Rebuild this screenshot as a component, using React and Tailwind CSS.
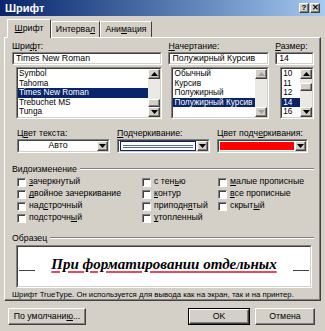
import React from "react";

// ---------- win2000 bits ----------

const raised =
  "border border-t-white border-l-white border-r-[#404040] border-b-[#404040] bg-[#d4d0c8] shadow-[inset_-1px_-1px_0_#808080]";

function Sunken({ className = "", inner = "", children }) {
  return (
    <div className={`border border-t-[#808080] border-l-[#808080] border-r-white border-b-white ${className}`}>
      <div className={`h-full w-full border border-t-[#404040] border-l-[#404040] border-r-[#d4d0c8] border-b-[#d4d0c8] bg-white ${inner}`}>
        {children}
      </div>
    </div>
  );
}

function Tri({ dir = "down", color = "#000000" }) {
  return (
    <svg width="7" height="4" viewBox="0 0 7 4">
      <path d={dir === "down" ? "M0 0H7L3.5 4Z" : "M0 4H7L3.5 0Z"} fill={color} />
    </svg>
  );
}

function ArrowBtn({ dir = "down", disabled = false, className = "" }) {
  return (
    <div className={`${raised} flex items-center justify-center ${className}`}>
      <Tri dir={dir} color={disabled ? "#a0a0a0" : "#000000"} />
    </div>
  );
}

function ScrollBar({ thumbTop, disabled = false }) {
  return (
    <div className="w-[12px] h-full flex flex-col bg-[#ebe9e4]">
      <ArrowBtn dir="up" disabled={disabled} className="h-[10px] w-full" />
      <div className="flex-1">
        {thumbTop !== undefined && (
          <div className={`${raised} h-[8px] w-full`} style={{ marginTop: thumbTop }} />
        )}
      </div>
      <ArrowBtn dir="down" disabled={disabled} className="h-[10px] w-full" />
    </div>
  );
}

function ListBox({ items, selected, thumbTop, disabled, className = "" }) {
  return (
    <Sunken className={`h-[52px] ${className}`} inner="flex overflow-hidden">
      <div className="flex-1 overflow-hidden text-[8.25px]">
        {items.map((it) => (
          <div
            key={it}
            className={
              it === selected
                ? "h-[9.6px] leading-[9.6px] pl-[1px] bg-[#0a246a] text-white whitespace-nowrap"
                : "h-[9.6px] leading-[9.6px] pl-[1px] whitespace-nowrap"
            }
          >
            {it}
          </div>
        ))}
      </div>
      <ScrollBar thumbTop={thumbTop} disabled={disabled} />
    </Sunken>
  );
}

function Combo({ className = "", children }) {
  return (
    <Sunken className={`h-[14px] ${className}`} inner="flex">
      <div className="flex-1 flex items-center overflow-hidden">{children}</div>
      <ArrowBtn className="w-[11px] h-full" />
    </Sunken>
  );
}

function Check({ children }) {
  return (
    <div className="h-[12px] flex items-center gap-[3px]">
      <div className="w-[9px] h-[9px] bg-white border border-t-[#808080] border-l-[#808080] border-r-white border-b-white shadow-[inset_1px_1px_0_#404040]" />
      <span className="whitespace-nowrap">{children}</span>
    </div>
  );
}

function GroupLabel({ children }) {
  return (
    <div className="h-[10px] flex items-center">
      <span className="leading-[10px] pr-[3px]">{children}</span>
      <div className="flex-1 border-t border-t-[#808080] border-b border-b-white" />
    </div>
  );
}

// ---------- dialog ----------

export default function App() {
  return (
    <div className="w-[325px] h-[331px] bg-[#d4d0c8] flex flex-col overflow-hidden text-[8.75px] text-black font-['Liberation_Sans',Arial,sans-serif]">

      {/* TITLE BAR */}

      <div className="h-[16px] flex items-center justify-between pl-[5px] pr-[5px] bg-gradient-to-r from-[#0a246a] to-[#a6caf0]">
        <span className="text-white font-bold text-[11px]">Шрифт</span>
        <div className="flex gap-[1px]">
          <div className={`${raised} w-[10px] h-[10px] flex items-center justify-center font-bold text-[8px] leading-none`}>?</div>
          <div className={`${raised} w-[10px] h-[10px] flex items-center justify-center font-bold text-[8px] leading-none`}>✕</div>
        </div>
      </div>

      <div className="px-[4px] pt-[3px] flex flex-col">

        {/* TABS */}

        <div className="flex items-end h-[18px] pl-[3px]">
          <div className="relative z-10 h-[19px] -mb-[1px] w-[44px] bg-[#d4d0c8] border-t border-l border-white border-r border-r-[#404040] flex items-center justify-center">
            <span><u>Ш</u>рифт</span>
          </div>
          <div className="h-[16px] w-[49px] border-t border-l border-white border-r border-r-[#404040] flex items-center justify-center">
            <span>Интерва<u>л</u></span>
          </div>
          <div className="h-[16px] w-[52px] border-t border-l border-white border-r border-r-[#404040] flex items-center justify-center">
            <span>Ани<u>м</u>ация</span>
          </div>
        </div>

        {/* PANEL */}

        <div className="h-[264px] border border-t-white border-l-white border-r-[#404040] border-b-[#404040] shadow-[inset_-1px_-1px_0_#808080] pl-[7px] pr-[6px] pt-[3px] flex flex-col">

          {/* FONT / STYLE / SIZE */}

          <div className="flex gap-[6px]">
            <div className="w-[151px] flex flex-col">
              <div className="h-[10px] leading-[10px] mb-[1px]">Шри<u>ф</u>т:</div>
              <Sunken className="h-[13px]" inner="flex items-center pl-[2px]">Times New Roman</Sunken>
              <ListBox
                className="mt-[2px] ml-[4px]"
                items={["Symbol", "Tahoma", "Times New Roman", "Trebuchet MS", "Tunga"]}
                selected="Times New Roman"
                thumbTop={20}
              />
            </div>
            <div className="w-[101px] flex flex-col">
              <div className="h-[10px] leading-[10px] mb-[1px]"><u>Н</u>ачертание:</div>
              <Sunken className="h-[13px]" inner="flex items-center pl-[2px] whitespace-nowrap">Полужирный Курсив</Sunken>
              <ListBox
                className="mt-[2px] ml-[3px]"
                items={["Обычный", "Курсив", "Полужирный", "Полужирный Курсив"]}
                selected="Полужирный Курсив"
                disabled
              />
            </div>
            <div className="w-[39px] flex flex-col">
              <div className="h-[10px] leading-[10px] mb-[1px]"><u>Р</u>азмер:</div>
              <Sunken className="h-[13px]" inner="flex items-center pl-[2px]">14</Sunken>
              <ListBox
                className="mt-[2px] ml-[5px]"
                items={["10", "11", "12", "14", "16"]}
                selected="14"
                thumbTop={4}
              />
            </div>
          </div>

          {/* COLOURS */}

          <div className="flex gap-[7px] pl-[5px] mt-[9px]">
            <div className="w-[93px] flex flex-col">
              <div className="h-[10px] leading-[10px] mb-[1px]">Ц<u>в</u>ет текста:</div>
              <Combo>
                <span className="w-full text-center">Авто</span>
              </Combo>
            </div>
            <div className="w-[93px] flex flex-col">
              <div className="h-[10px] leading-[10px] mb-[1px]"><u>П</u>одчеркивание:</div>
              <Combo>
                <div className="w-full h-full m-[1px] border border-[#0a246a] flex items-center px-[2px]">
                  <div className="w-full h-[3px] border-t border-b border-[#5a6a8a]" />
                </div>
              </Combo>
            </div>
            <div className="w-[91px] flex flex-col">
              <div className="h-[10px] leading-[10px] mb-[1px] whitespace-nowrap">Цвет подч<u>е</u>ркивания:</div>
              <Combo>
                <div className="w-full h-full border border-white bg-[#ff0000]" />
              </Combo>
            </div>
          </div>

          {/* EFFECTS */}

          <div className="mt-[11px]">
            <GroupLabel>Видоизменение</GroupLabel>
          </div>

          <div className="grid grid-cols-[125px_76px_1fr] pl-[5px] mt-[2px]">
            <div className="flex flex-col">
              <Check><u>з</u>ачеркнутый</Check>
              <Check><u>д</u>войное зачеркивание</Check>
              <Check>над<u>с</u>трочный</Check>
              <Check>подстрочн<u>ы</u>й</Check>
            </div>
            <div className="flex flex-col">
              <Check>с тен<u>ь</u>ю</Check>
              <Check><u>к</u>онтур</Check>
              <Check>приподн<u>я</u>тый</Check>
              <Check><u>у</u>топленный</Check>
            </div>
            <div className="flex flex-col">
              <Check><u>м</u>алые прописные</Check>
              <Check><u>в</u>се прописные</Check>
              <Check>скрыт<u>ы</u>й</Check>
            </div>
          </div>

          {/* SAMPLE */}

          <div className="mt-[9px]">
            <GroupLabel>Образец</GroupLabel>
          </div>

          <Sunken className="h-[44px] ml-[4px] w-[296px] mt-[2px]" inner="flex items-center justify-between px-[1px] pb-[4px]">
            <div className="w-[16px] border-t border-t-[#404040] mt-[12px]" />
            <span className="font-['Liberation_Serif','Times_New_Roman',serif] font-bold italic text-[15px] leading-none underline decoration-[#e84a5a] decoration-2 underline-offset-[2px]">
              При форматировании отдельных
            </span>
            <div className="w-[16px] border-t border-t-[#404040] mt-[12px]" />
          </Sunken>

          <div className="mt-[2px] h-[10px] leading-[10px] text-[7.75px] whitespace-nowrap">
            Шрифт TrueType. Он используется для вывода как на экран, так и на принтер.
          </div>

        </div>

        {/* BUTTONS */}

        <div className="flex mt-[7px] pl-[4px] pr-[6px]">
          <div className={`${raised} w-[78px] h-[17px] flex items-center justify-center`}>
            <span>По умолчани<u>ю</u>...</span>
          </div>
          <div className="flex-1" />
          <div className="w-[62px] h-[17px] border border-black">
            <div className={`${raised} w-full h-full flex items-center justify-center`}>OK</div>
          </div>
          <div className={`${raised} ml-[5px] w-[60px] h-[17px] flex items-center justify-center`}>
            Отмена
          </div>
        </div>

      </div>
    </div>
  );
}
